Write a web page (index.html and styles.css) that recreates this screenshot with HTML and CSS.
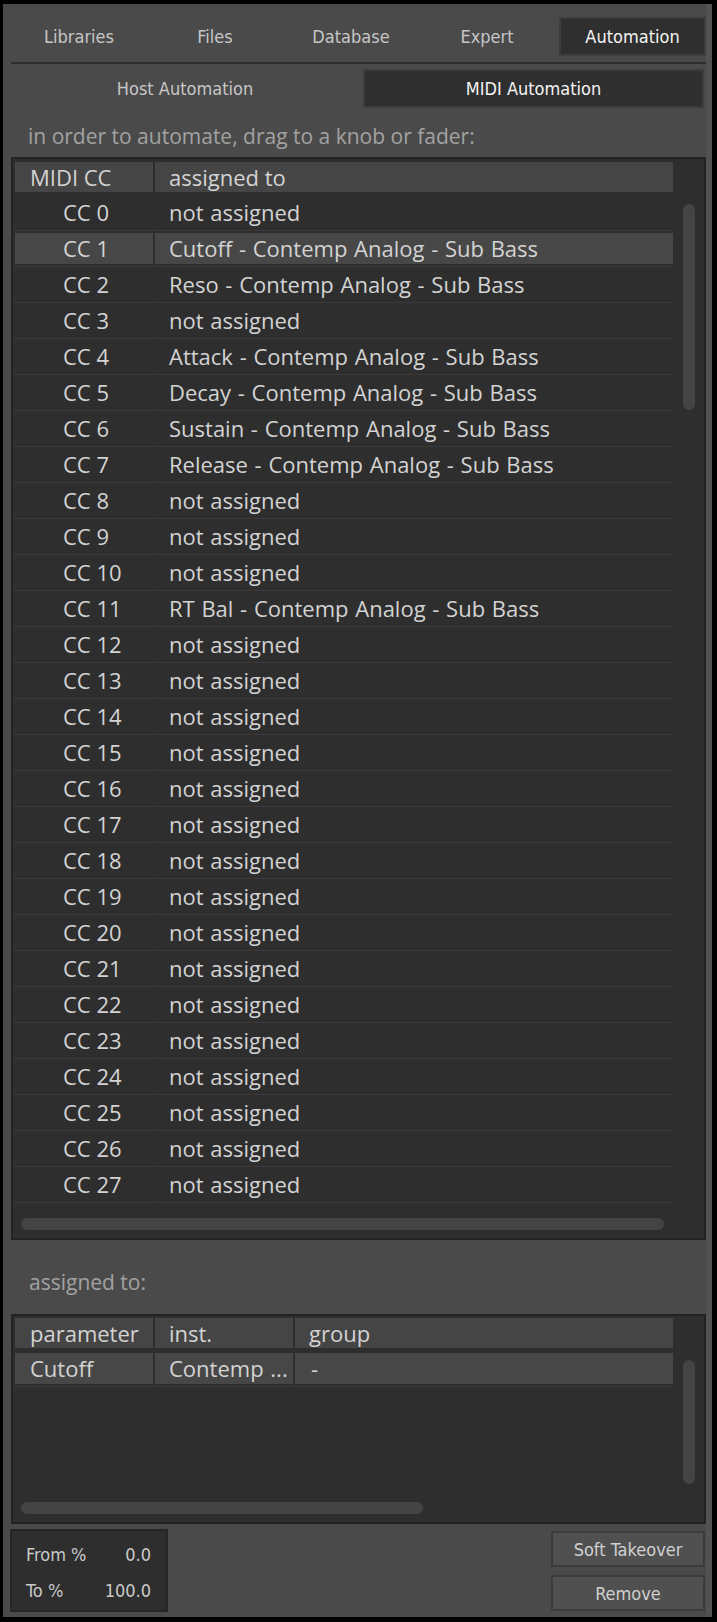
FILE: index.html
```html
<!DOCTYPE html>
<html>
<head>
<meta charset="utf-8">
<link rel="stylesheet" href="styles.css">
</head>
<body>
<div class="panel">
  <div class="tabs">
    <div class="tab">Libraries</div>
    <div class="tab">Files</div>
    <div class="tab">Database</div>
    <div class="tab">Expert</div>
    <div class="tab tab-active">Automation</div>
  </div>
  <div class="sep"></div>
  <div class="subtabs">
    <div class="subtab">Host Automation</div>
    <div class="subtab subtab-active">MIDI Automation</div>
  </div>
  <div class="hint">in order to automate, drag to a knob or fader:</div>

  <div class="table table-cc">
    <div class="head head-cc">
      <div class="hcell">MIDI CC</div>
      <div class="hcell">assigned to</div>
    </div>
    <div class="rows">
      <div class="row"><div class="cell cc">CC 0</div><div class="cell">not assigned</div></div>
      <div class="row sel"><div class="cell cc">CC 1</div><div class="cell">Cutoff - Contemp Analog - Sub Bass</div></div>
      <div class="row"><div class="cell cc">CC 2</div><div class="cell">Reso - Contemp Analog - Sub Bass</div></div>
      <div class="row"><div class="cell cc">CC 3</div><div class="cell">not assigned</div></div>
      <div class="row"><div class="cell cc">CC 4</div><div class="cell">Attack - Contemp Analog - Sub Bass</div></div>
      <div class="row"><div class="cell cc">CC 5</div><div class="cell">Decay - Contemp Analog - Sub Bass</div></div>
      <div class="row"><div class="cell cc">CC 6</div><div class="cell">Sustain - Contemp Analog - Sub Bass</div></div>
      <div class="row"><div class="cell cc">CC 7</div><div class="cell">Release - Contemp Analog - Sub Bass</div></div>
      <div class="row"><div class="cell cc">CC 8</div><div class="cell">not assigned</div></div>
      <div class="row"><div class="cell cc">CC 9</div><div class="cell">not assigned</div></div>
      <div class="row"><div class="cell cc">CC 10</div><div class="cell">not assigned</div></div>
      <div class="row"><div class="cell cc">CC 11</div><div class="cell">RT Bal - Contemp Analog - Sub Bass</div></div>
      <div class="row"><div class="cell cc">CC 12</div><div class="cell">not assigned</div></div>
      <div class="row"><div class="cell cc">CC 13</div><div class="cell">not assigned</div></div>
      <div class="row"><div class="cell cc">CC 14</div><div class="cell">not assigned</div></div>
      <div class="row"><div class="cell cc">CC 15</div><div class="cell">not assigned</div></div>
      <div class="row"><div class="cell cc">CC 16</div><div class="cell">not assigned</div></div>
      <div class="row"><div class="cell cc">CC 17</div><div class="cell">not assigned</div></div>
      <div class="row"><div class="cell cc">CC 18</div><div class="cell">not assigned</div></div>
      <div class="row"><div class="cell cc">CC 19</div><div class="cell">not assigned</div></div>
      <div class="row"><div class="cell cc">CC 20</div><div class="cell">not assigned</div></div>
      <div class="row"><div class="cell cc">CC 21</div><div class="cell">not assigned</div></div>
      <div class="row"><div class="cell cc">CC 22</div><div class="cell">not assigned</div></div>
      <div class="row"><div class="cell cc">CC 23</div><div class="cell">not assigned</div></div>
      <div class="row"><div class="cell cc">CC 24</div><div class="cell">not assigned</div></div>
      <div class="row"><div class="cell cc">CC 25</div><div class="cell">not assigned</div></div>
      <div class="row"><div class="cell cc">CC 26</div><div class="cell">not assigned</div></div>
      <div class="row"><div class="cell cc">CC 27</div><div class="cell">not assigned</div></div>
    </div>
    <div class="hscroll hscroll-cc"></div>
    <div class="vscroll vscroll-cc"></div>
  </div>

  <div class="label">assigned to:</div>

  <div class="table table-as">
    <div class="head head-as">
      <div class="hcell">parameter</div>
      <div class="hcell">inst.</div>
      <div class="hcell">group</div>
    </div>
    <div class="rows rows-as">
      <div class="row row-as sel"><div class="cell p15">Cutoff</div><div class="cell">Contemp ...</div><div class="cell p16">-</div></div>
    </div>
    <div class="hscroll hscroll-as"></div>
    <div class="vscroll vscroll-as"></div>
  </div>

  <div class="bottom">
    <div class="range">
      <div class="rline"><span>From %</span><span>0.0</span></div>
      <div class="rline"><span>To %</span><span>100.0</span></div>
    </div>
    <div class="buttons">
      <div class="btn">Soft Takeover</div>
      <div class="btn">Remove</div>
    </div>
  </div>
</div>
</body>
</html>
```

FILE: styles.css
```css
* { box-sizing: border-box; }
html, body { margin: 0; padding: 0; background: #000; }
body { width: 717px; height: 1622px; overflow: hidden; }

.panel {
  margin: 4px 5px 0 3px;
  width: 709px;
  height: 1613px;
  background: #4a4a4a;
  border-right: 6px solid #525252;
  padding-left: 8px;
  display: flex;
  flex-direction: column;
  overflow: hidden;
}

.tabs {
  margin-top: 13px;
  display: flex;
  height: 39px;
  font-family: "DejaVu Sans Condensed", "DejaVu Sans", sans-serif;
  font-size: 18px;
  color: #c6c6c6;
}
.tab {
  width: 136px;
  display: flex;
  align-items: center;
  justify-content: center;
}
.tab-active {
  margin-left: 4px;
  width: 147px;
  background: #2f2f2f;
  border: 2px solid #3d3d3d;
  color: #f4f4f4;
}

.sep {
  margin-top: 6px;
  height: 2px;
  background: #2e2e2e;
}

.subtabs {
  margin-top: 5px;
  height: 39px;
  display: grid;
  grid-template-columns: 352px 341px;
  font-family: "DejaVu Sans Condensed", "DejaVu Sans", sans-serif;
  font-size: 18px;
  color: #c6c6c6;
}
.subtab {
  display: flex;
  align-items: center;
  justify-content: center;
  padding-right: 4px;
}
.subtab-active {
  padding-right: 0;
  background: #2f2f2f;
  border: 2px solid #3d3d3d;
  color: #f4f4f4;
}

.hint, .label {
  font-family: "Open Sans", sans-serif;
  font-size: 21px;
  color: #a2a2a2;
  height: 28px;
  line-height: 28px;
  padding-left: 17px;
}
.hint { margin-top: 14px; }
.label { margin-top: 28px; padding-left: 18px; }

.table {
  position: relative;
  width: 695px;
  background: #2e2e2e;
  border: 2px solid #232323;
  padding: 3px 0 0 2px;
  font-family: "Open Sans", sans-serif;
  font-size: 22px;
  color: #d3d3d3;
}
.table-cc { margin-top: 7px; height: 1083px; }
.table-as { margin-top: 18px; height: 210px; padding-top: 2px; }

.head {
  display: grid;
  column-gap: 2px;
  height: 30px;
}
.head-cc { grid-template-columns: 138px 518px; }
.head-as { grid-template-columns: 138px 138px 378px; }
.hcell {
  background: #454545;
  line-height: 30px;
  padding-left: 14px;
  white-space: nowrap;
}
.hcell:first-child { padding-left: 15px; }

.rows { margin-top: 3px; }
.row {
  display: grid;
  grid-template-columns: 138px 518px;
  column-gap: 2px;
  height: 36px;
  padding-top: 2px;
}
.row-as { grid-template-columns: 138px 138px 378px; }
.cell {
  height: 34px;
  line-height: 31px;
  padding: 0 0 0 14px;
  border-bottom: 1px solid #3a3a3a;
  white-space: nowrap;
  overflow: hidden;
  word-spacing: 1px;
}
.cell.cc { padding-left: 48px; word-spacing: 0; }
.cell.p15 { padding-left: 15px; }
.cell.p16 { padding-left: 16px; }
.sel .cell {
  background: linear-gradient(#474747, #474747) top / 100% 31px no-repeat;
}

.hscroll {
  height: 12px;
  border-radius: 6px;
  background: #444444;
}
.hscroll-cc { margin-top: 15px; margin-left: 6px; width: 643px; }
.hscroll-as { position: absolute; left: 8px; top: 186px; width: 402px; }

.vscroll {
  position: absolute;
  width: 12px;
  border-radius: 6px;
  background: #444444;
  left: 670px;
}
.vscroll-cc { top: 45px; height: 206px; }
.vscroll-as { top: 44px; height: 124px; }

.bottom {
  margin-top: 5px;
  margin-left: -1px;
  display: flex;
  justify-content: space-between;
  font-family: "DejaVu Sans Condensed", "DejaVu Sans", sans-serif;
  font-size: 18px;
  color: #cacaca;
}
.range {
  width: 158px;
  height: 83px;
  background: #2e2e2e;
  border: 2px solid #262626;
  padding: 6px 15px 0 14px;
}
.rline {
  display: flex;
  justify-content: space-between;
  height: 36px;
  line-height: 36px;
}
.buttons {
  display: flex;
  flex-direction: column;
  gap: 8px;
  padding-top: 2px;
  margin-right: 1px;
}
.btn {
  width: 154px;
  height: 36px;
  background: #505050;
  border: 2px solid #3c3c3c;
  display: flex;
  align-items: center;
  justify-content: center;
  color: #d0d0d0;
}
```
